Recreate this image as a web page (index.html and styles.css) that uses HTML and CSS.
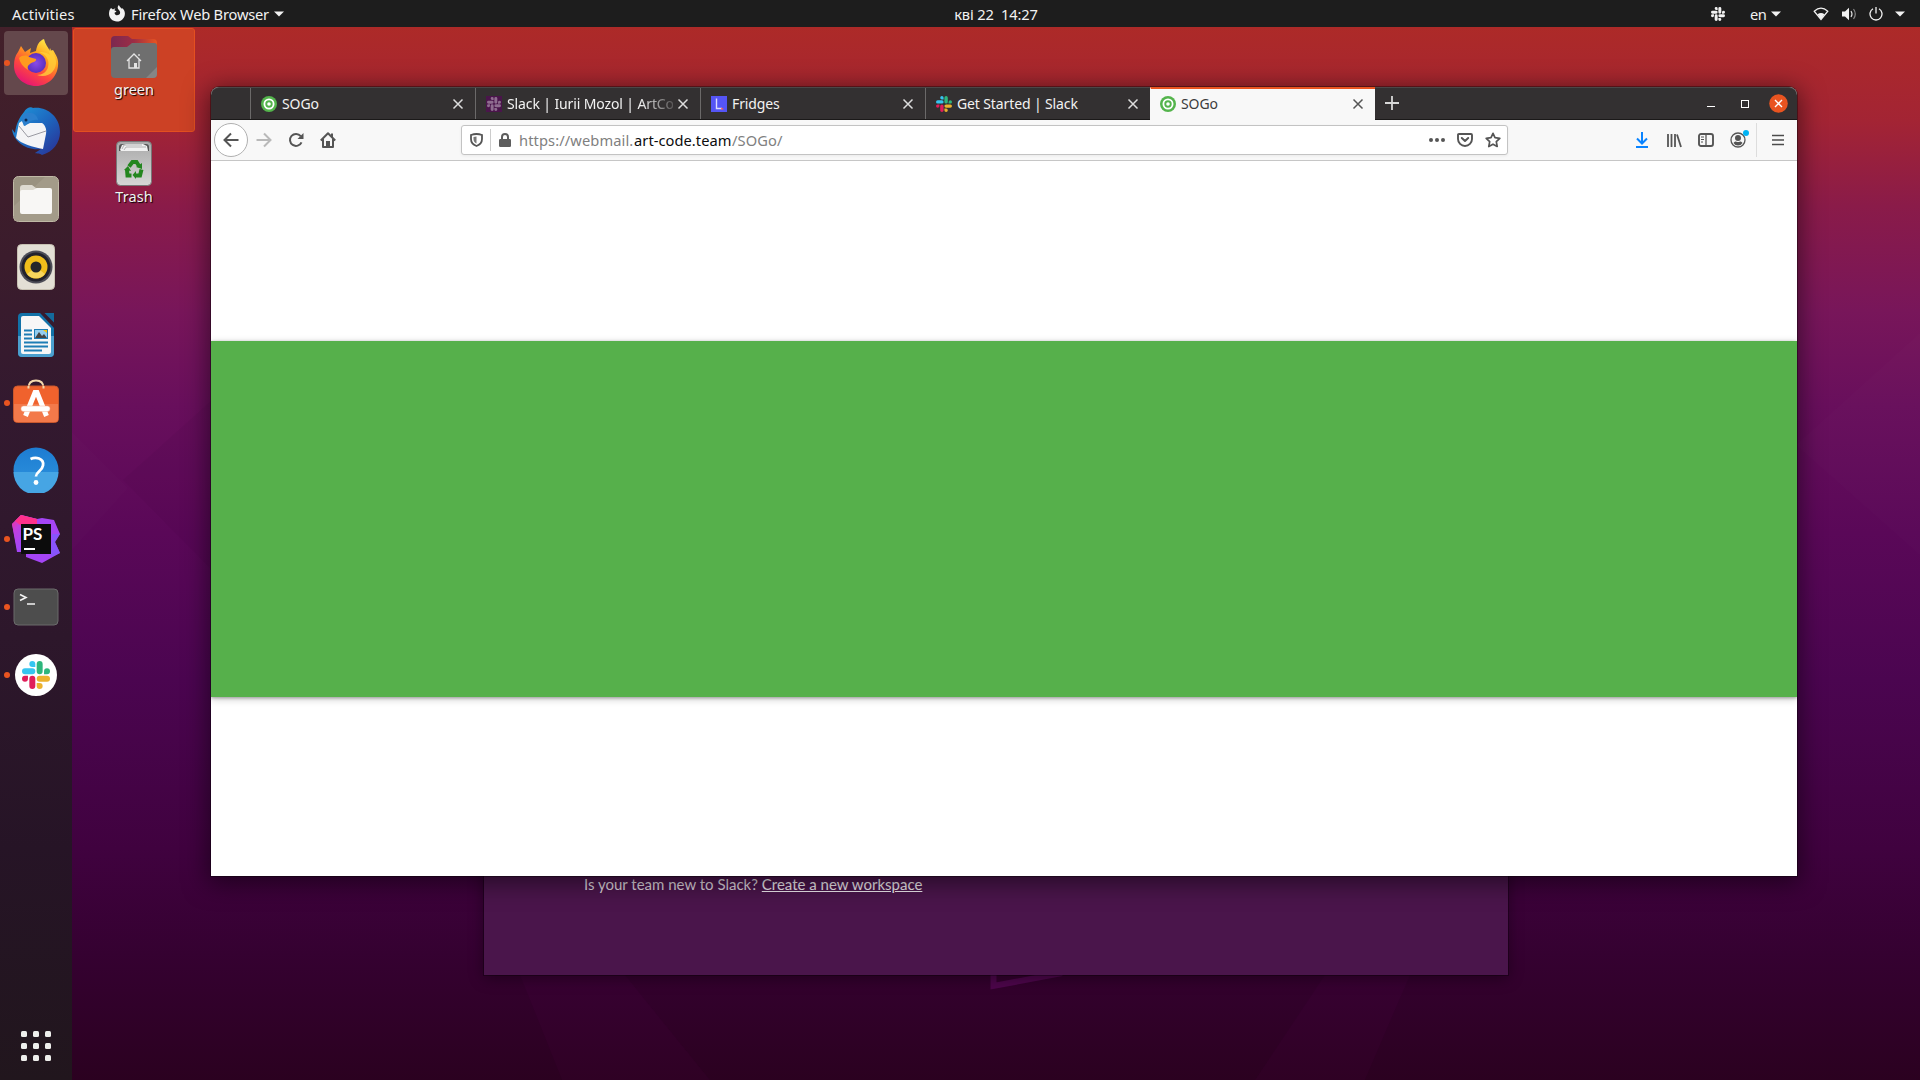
FILE: index.html
```html
<!DOCTYPE html>
<html lang="en">
<head>
<meta charset="utf-8">
<title>Desktop</title>
<link rel="stylesheet" href="styles.css">
</head>
<body>
<svg class="defs" width="0" height="0">
  <defs>
    <symbol id="sogo" viewBox="0 0 16 16"><circle cx="8" cy="8" r="8" fill="#54b44c"/><circle cx="8" cy="8" r="4.6" fill="none" stroke="#fff" stroke-width="1.8"/><circle cx="8" cy="8" r="1.8" fill="#fff"/></symbol>
    <symbol id="slack" viewBox="0 0 122 122">
      <path fill="var(--c1,#e01e5a)" d="M26 77a13 13 0 1 1-13-13h13zM32 77a13 13 0 0 1 26 0v32a13 13 0 0 1-26 0z"/>
      <path fill="var(--c2,#36c5f0)" d="M45 26a13 13 0 1 1 13-13v13zM45 32a13 13 0 0 1 0 26H13a13 13 0 0 1 0-26z"/>
      <path fill="var(--c3,#2eb67d)" d="M96 45a13 13 0 1 1 13 13H96zM90 45a13 13 0 0 1-26 0V13a13 13 0 0 1 26 0z"/>
      <path fill="var(--c4,#ecb22e)" d="M77 96a13 13 0 1 1-13 13V96zM77 90a13 13 0 0 1 0-26h32a13 13 0 0 1 0 26z"/>
    </symbol>
    <symbol id="close" viewBox="0 0 12 12"><path d="M1.5 1.5l9 9M10.5 1.5l-9 9" fill="none" stroke="currentColor" stroke-width="1.5"/></symbol>
    <symbol id="caret" viewBox="0 0 10 6"><path d="M0 .5h10L5 5.5z" fill="currentColor"/></symbol>
    <linearGradient id="gFox" x1=".8" y1="0" x2=".25" y2="1"><stop offset="0" stop-color="#fff44f"/><stop offset=".35" stop-color="#ffa21c"/><stop offset=".65" stop-color="#ff4a3c"/><stop offset="1" stop-color="#e3107a"/></linearGradient>
    <radialGradient id="gOrb"><stop offset="0" stop-color="#8a4be8"/><stop offset="1" stop-color="#5a2fc0"/></radialGradient>
    <linearGradient id="gBird" x1="0" y1="0" x2="1" y2="1"><stop offset="0" stop-color="#1f9bdc"/><stop offset=".5" stop-color="#1d67bf"/><stop offset="1" stop-color="#2b2c92"/></linearGradient>
    <linearGradient id="gPs" x1="0" y1="0" x2="1" y2="1"><stop offset="0" stop-color="#ff318c"/><stop offset=".3" stop-color="#c040e0"/><stop offset=".6" stop-color="#a545f5"/><stop offset="1" stop-color="#7a5bff"/></linearGradient>
    <linearGradient id="gBin" x1="0" y1="0" x2="0" y2="1"><stop offset="0" stop-color="#a9a9a9"/><stop offset="1" stop-color="#d6d6d6"/></linearGradient>
    <linearGradient id="gTab" x1="0" y1="0" x2="1" y2="0"><stop offset="0" stop-color="#7b2850"/><stop offset=".5" stop-color="#9c2d45"/><stop offset="1" stop-color="#e95420"/></linearGradient>
    <linearGradient id="gHelp" x1="0" y1="0" x2="0" y2="1"><stop offset="0" stop-color="#1d7cd2"/><stop offset="1" stop-color="#2f95de"/></linearGradient>
  </defs>
</svg>

<header class="topbar">
  <div class="topbar-left">
    <span class="t-act">Activities</span>
    <svg class="t-fox" width="16" height="17" viewBox="0 0 16 17"><path fill="#f2f2f2" fill-rule="evenodd" d="M2 3l2 1.600C5 3.800 5.500 3.500 6.500 3.600 5.600 4.200 5.400 5 5.800 5.700c1.200.1 1.600.4 1.500 1-.5.6-1.500.5-1.800 1.200.4 1.700 2 2.700 3.700 2.200 1.700-.6 2.300-2.100 1.700-3.700C10.400 5.100 9 4.600 8.700 3 8.600 1.700 9.200.7 10 0c.2 1.300 1 2 2.100 2.900.4.300.7.600 1 1l.2-1c1.600 1.600 2.600 3.400 2.600 5.500C15.900 13 12.400 16.500 8 16.500S0 13.200 0 8.800C0 6.500.6 4.500 2 3z"/></svg>
    <span class="t-app">Firefox Web Browser</span>
    <svg class="t-caret" width="10" height="6"><use href="#caret"/></svg>
  </div>
  <div class="clock">кві 22&nbsp; 14:27</div>
  <div class="topbar-right">
    <svg class="tray-slack" width="14" height="14"><use href="#slack"/></svg>
    <span class="t-en">en</span>
    <svg class="en-caret" width="10" height="6"><use href="#caret"/></svg>
    <svg class="wifi" width="16" height="14" viewBox="0 0 16 14"><path d="M1.200 4.200Q8-1.800 14.800 4.200L8 12.500z" fill="none" stroke="#f2f2f2" stroke-width="1.200"/><path d="M4.500 7.200Q8 5 11.500 7.200L8 12.500z" fill="#f2f2f2"/></svg>
    <svg class="vol" width="15" height="14" viewBox="0 0 15 14"><path d="M0 4.500h3L7 .800v12.400L3 9.500H0z" fill="#f2f2f2"/><path d="M9 4q2 3 0 6" fill="none" stroke="#ddd" stroke-width="1.200"/><path d="M11.500 2q3.600 5 0 10" fill="none" stroke="#888" stroke-width="1.200"/></svg>
    <svg class="power" width="14" height="14" viewBox="0 0 14 14"><path d="M4 1.800a6 6 0 1 0 6 0M7 0v6.500" fill="none" stroke="#f2f2f2" stroke-width="1.300"/></svg>
    <svg class="sys-caret" width="10" height="6"><use href="#caret"/></svg>
  </div>
</header>

<main class="desktop">
  <svg class="wallpaper" width="1920" height="1053" viewBox="0 27 1920 1053">
    <path fill="#fff" opacity=".012" d="M72 432L128 488 72 550zM1796 445L1920 333V555z"/>
    <path fill="#000" opacity=".03" d="M123 480L212 570V400z"/>
    <path fill="#a020a0" opacity=".035" d="M520 975h105l85 105H562zM1255 1080l70-105h85l-45 105z"/>
    <path d="M993.500 960V986L1062 973" fill="none" stroke="#4d064b" stroke-width="6"/>
  </svg>

  <nav class="dock">
    <div class="app on active"><svg width="48" height="48" viewBox="0 0 48 48"><path fill="url(#gFox)" d="M6 13l3-6 4 6 6-4-1 5 6-2c1-6 3-10 8-12 1 5 4 8 6 12l3-1c3 5 6 9 5 16-1 11-10 20-22 20S2 38 2 27c0-6 1-10 4-14z"/><circle cx="24" cy="24" r="10" fill="url(#gOrb)"/><path fill="#ff9a1e" d="M7 19c3-3 8-3 10-1l7 2c1 3-4 3-6 5-2 1-3 3-2 6-5-3-8-7-9-12z"/><path fill="#ffcf3a" opacity=".8" d="M27 13c7 2 11 8 9 15-1 5-6 8-11 8 11 4 20-4 19-14-1-6-4-9-6-13-1 2-1 5 0 7-4-3-7-3-11-3z"/></svg></div>
    <div class="app"><svg width="48" height="48" viewBox="0 0 48 48"><path fill="url(#gBird)" d="M12 5C14 1 19-1 21 1c13-2 27 8 27 24 0 11-7 20-18 23-2-2-5-1-7-2l6-4C14 44 1 34 0 22l3 4c1-9 4-15 9-21z"/><path fill="#f4f4f6" d="M7 16l3-2 2 5 6-3 12 0c3 2 5 6 4 11l-3 15C21 40 9 37 4 31z"/><path fill="none" stroke="#9a9aa2" stroke-width="1" d="M7 19l9 11 18-6"/><path fill="#2b7fcd" d="M12 7c7-3 13 0 14 6-5-1-9 1-13 6-3-4-4-8-1-12z"/><circle cx="14" cy="13" r="1.500" fill="#0b2b55"/></svg></div>
    <div class="app"><svg width="46" height="46" viewBox="0 0 46 46"><rect x=".5" y=".5" width="45" height="45" rx="5" fill="#9a9280" stroke="#c0b9a6"/><path d="M1 45V30L32 1h9q4 0 4 4v36q0 4-4 4z" fill="#aaa28f" opacity=".6"/><path d="M7 12q0-3 3-3h9l4 3h12v10H7z" fill="#dedad0"/><path d="M7 16q0-2 2-2h11l4-2h13q2 0 2 2v22q0 2-2 2H9q-2 0-2-2z" fill="#f8f7f5"/></svg></div>
    <div class="app"><svg width="38" height="46" viewBox="0 0 38 46"><rect x=".5" y=".5" width="37" height="45" rx="4" fill="#e3dfd5" stroke="#c7c1b2"/><circle cx="19" cy="23" r="16.500" fill="#4d4d57"/><circle cx="19" cy="23" r="14.500" fill="#22222c"/><circle cx="19" cy="23" r="11.500" fill="#efbd1b"/><path d="M10 30a11.500 11.500 0 0 0 18 0L19 23z" fill="#f7d65c"/><circle cx="19" cy="23" r="5.500" fill="#24262a"/></svg></div>
    <div class="app"><svg width="38" height="46" viewBox="0 0 38 46"><path d="M5 1h18l14 15v25q0 4-4 4H5q-4 0-4-4V5q0-4 4-4z" fill="#1272a8"/><path d="M1 24h36v17q0 4-4 4H5q-4 0-4-4z" fill="#4b9fce"/><path d="M27.500 1H37v9.500z" fill="#146a9c"/><path d="M6 4h16l12 12v24q0 2-2 2H6q-2 0-2-2V6q0-2 2-2z" fill="#f7f7f7"/><path d="M7 18.500h8M7 22.500h8M7 26.500h8M7 30.500h24M7 34.500h24M7 38.500h18" stroke="#1d7db5" stroke-width="2"/><rect x="17" y="17" width="14" height="10" fill="#1d7db5"/><rect x="18" y="18" width="12" height="8" fill="#93cdf0"/><path d="M18 26l4-6 3 4 2-2 3 4z" fill="#444"/><path d="M26 18h4v3z" fill="#f1c40f"/></svg></div>
    <div class="app on"><svg class="store" width="46" height="44" viewBox="0 0 46 44"><path d="M15.500 11V9q0-7.500 7.500-7.500T30.500 9v2" fill="none" stroke="#f4d9ad" stroke-width="1.800"/><rect x=".5" y="7" width="45" height="36.500" rx="4" fill="#f0622d" stroke="#c8582e"/><path d="M1 25h44v15q0 3-3 3H4q-3 0-3-3z" fill="#f3794a"/><path d="M15.500 9.500V7M30.500 9.500V7" stroke="#f4d9ad" stroke-width="2"/><path d="M12.500 37L22 13.500h2L33.500 37" fill="none" stroke="#fff" stroke-width="5"/><rect x="8" y="27" width="29" height="5.500" rx="2.700" fill="#fff" stroke="#f3b294" stroke-width=".5"/></svg></div>
    <div class="app"><svg class="help" width="46" height="46" viewBox="0 0 46 46"><circle cx="23" cy="23" r="22.500" fill="url(#gHelp)"/><path d="M.5 25a22.500 22.500 0 0 0 45 0z" fill="#46a5e4"/><path d="M17.500 12Q22 10 26 11.500q5 2 4 7-.5 3-4 6-3 2.500-3 5" fill="none" stroke="#fff" stroke-width="2.800"/><circle cx="23" cy="35.500" r="2.400" fill="#fff"/></svg></div>
    <div class="app on"><svg width="48" height="48" viewBox="0 0 48 48"><path fill="#a545f5" d="M0 9L9 0l16 4 5-1 12 2 6 14-5 8 5 11-18 10-16-6v-5H5z"/><path fill="url(#gPs)" d="M0 9L9 0l16 4v30H5z"/><path fill="#ff318c" d="M3 6l6-6 16 4v6H8z"/><path fill="#7a5bff" d="M40 19l8 0-5 8 5 11-9 4z" opacity=".7"/><rect x="9" y="9" width="30" height="30" fill="#0c0c0c"/><text x="10.500" y="24.500" class="ps">PS</text><rect x="12" y="33" width="11" height="2" fill="#fff"/></svg></div>
    <div class="app on"><svg width="46" height="38" viewBox="0 0 46 38"><rect x="1" y="1" width="44" height="36" rx="4" fill="#4d4d4d" stroke="#6b6b6b"/><path d="M7 6.500l6 3-6 3M14 16h8" fill="none" stroke="#f2f2f2" stroke-width="1.600"/></svg></div>
    <div class="app on"><span class="slack-disc"><svg width="28" height="28"><use href="#slack"/></svg></span></div>
    <div class="grid-btn"><i></i><i></i><i></i><i></i><i></i><i></i><i></i><i></i><i></i></div>
  </nav>

  <section class="shortcuts">
    <div class="shortcut selected">
      <svg width="46" height="42" viewBox="0 0 46 42"><path d="M0 14V4q0-4 4-4h13l4 3h21q4 0 4 4v8z" fill="url(#gTab)"/><path d="M0 14q0-3 3-3h13l5-4h22q3 0 3 3v28q0 4-4 4H4q-4 0-4-4z" fill="#6f6f6f"/><path d="M35 42L46 31v7q0 4-4 4z" fill="#858585"/><path d="M16 25l7-7 7 7M18 23.500V32h10v-8.500M28 20v-2" fill="none" stroke="#e4e4e4" stroke-width="1.300"/><rect x="23" y="27" width="3" height="5" fill="#e4e4e4"/></svg>
      <span>green</span>
    </div>
    <div class="shortcut trash">
      <svg width="36" height="45" viewBox="0 0 36 45"><rect x=".5" y=".5" width="35" height="44" rx="4" fill="url(#gBin)" stroke="#787878"/><path d="M3 10V6q0-3 3-3h24q3 0 3 3v4z" fill="#555"/><path d="M4 9l2-5 4-1h17l4 2 1 5H5z" fill="#f1f1f1"/><path d="M6 8L8 4h18M8 9l2-3h20" stroke="#999" fill="none" stroke-width=".7"/><g fill="none" stroke="#23861f" stroke-width="4"><path d="M13 25.500l3.500-4.500h4l2.500 4"/><path d="M25.500 28.500l-1.500 6h-4.500"/><path d="M15.500 34.500h-4l-.5-6"/></g><path fill="#23861f" d="M20 26l6-4 0 6zM20 30v8l-3.500-4zM8 29l4-4 3 5z"/></svg>
      <span>Trash</span>
    </div>
  </section>

  <section class="slack-window">
    <p>Is your team new to Slack? <a>Create a new workspace</a></p>
  </section>

  <section class="browser">
    <div class="tabs">
      <div class="tab"><svg width="16" height="16"><use href="#sogo"/></svg><span>SOGo</span><svg class="x" width="12" height="12"><use href="#close"/></svg></div>
      <div class="tab"><b class="fav dim"><svg width="14" height="14"><use href="#slack"/></svg></b><span class="fade">Slack | Iurii Mozol | ArtCo</span><svg class="x" width="12" height="12"><use href="#close"/></svg></div>
      <div class="tab"><svg width="16" height="16" viewBox="0 0 16 16"><rect width="16" height="16" fill="#5555f5"/><path d="M5.500 2.500v10H11" fill="none" stroke="#dcdcff" stroke-width="1.400"/><path d="M10 11.500l3 1.500-2.500 1z" fill="#ff5a4a"/></svg><span>Fridges</span><svg class="x" width="12" height="12"><use href="#close"/></svg></div>
      <div class="tab"><svg width="16" height="16"><use href="#slack"/></svg><span>Get Started | Slack</span><svg class="x" width="12" height="12"><use href="#close"/></svg></div>
      <div class="tab current"><svg width="16" height="16"><use href="#sogo"/></svg><span>SOGo</span><svg class="x" width="12" height="12"><use href="#close"/></svg></div>
      <svg class="plus" width="14" height="14" viewBox="0 0 14 14"><path d="M7 0v14M0 7h14" stroke="#d8d8d8" stroke-width="1.800"/></svg>
      <div class="controls">
        <svg width="8" height="8" viewBox="0 0 8 8"><path d="M0 6.500h8" stroke="#fff"/></svg>
        <svg width="8" height="8" viewBox="0 0 8 8"><rect x=".5" y=".5" width="7" height="7" fill="none" stroke="#fff"/></svg>
        <svg width="19" height="19" viewBox="0 0 19 19"><circle cx="9.500" cy="9.500" r="9.300" fill="#e95420"/><path d="M6 6l7 7M13 6l-7 7" stroke="#fff" stroke-width="1.400"/></svg>
      </div>
    </div>
    <div class="toolbar">
      <div class="nav">
        <span class="back"><svg width="16" height="16" viewBox="0 0 16 16"><path d="M15.500 8H1.500M8 1.500L1.500 8 8 14.500" fill="none" stroke="#555" stroke-width="2"/></svg></span>
        <svg class="fwd" width="16" height="16" viewBox="0 0 16 16"><path d="M.5 8h14M8 1.500L14.500 8 8 14.500" fill="none" stroke="#b9b9b9" stroke-width="2"/></svg>
        <svg class="reload" width="16" height="16" viewBox="0 0 16 16"><path d="M13.500 10.300a6 6 0 1 1-.8-6.100" fill="none" stroke="#555" stroke-width="2"/><path d="M15.500 1v6H9.500z" fill="#555"/></svg>
        <svg class="home" width="16" height="16" viewBox="0 0 16 16"><path d="M.800 8.500L8 1.300l7.200 7.200M3 7v8h10V7" fill="none" stroke="#555" stroke-width="2" stroke-linejoin="round"/><path d="M12 1.500v4" stroke="#555" stroke-width="2"/><path d="M6 15V9h4v6z" fill="#555"/></svg>
      </div>
      <div class="url">
        <svg class="shield" width="13" height="14" viewBox="0 0 13 14"><path d="M1 2Q6.500 0 12 2v4q0 5-5.500 7Q1 11 1 6z" fill="none" stroke="#555" stroke-width="1.800"/><path d="M6.500 3.500v7Q3.500 9 3.500 6V4z" fill="#777"/></svg>
        <i class="sep"></i>
        <svg class="lock" width="12" height="14" viewBox="0 0 12 14"><rect y="6" width="12" height="8" rx="1.300" fill="#5d5d5d"/><path d="M3 7V4a3 3 0 0 1 6 0v3" fill="none" stroke="#5d5d5d" stroke-width="2"/></svg>
        <span class="addr"><span class="a1">https://webmail.</span><span class="a2">art-code.team</span><span class="a3">/SOGo/</span></span>
        <svg class="dots" width="16" height="4" viewBox="0 0 16 4"><circle cx="2" cy="2" r="2"/><circle cx="8" cy="2" r="2"/><circle cx="14" cy="2" r="2"/></svg>
        <svg class="pocket" width="16" height="14" viewBox="0 0 16 14"><path d="M2 1h12q1 0 1 1v4a7 7 0 0 1-14 0V2q0-1 1-1z" fill="none" stroke="#555" stroke-width="1.900"/><path d="M4.800 5L8 8l3.200-3" fill="none" stroke="#555" stroke-width="2" stroke-linecap="round" stroke-linejoin="round"/></svg>
        <svg class="star" width="16" height="16" viewBox="0 0 16 16"><path d="M8 1.300l2 4.400 4.800.6-3.500 3.300.9 4.900L8 12.200l-4.200 2.300.9-4.900L1.200 6.300 6 5.700z" fill="none" stroke="#555" stroke-width="1.700" stroke-linejoin="round"/></svg>
      </div>
      <div class="tools">
        <svg width="14" height="16" viewBox="0 0 14 16"><path d="M7 0v11M2 6.500l5 5 5-5M1 15h12" fill="none" stroke="#0a84ff" stroke-width="2"/></svg>
        <svg width="16" height="15" viewBox="0 0 16 15"><path d="M2 1v13M5.500 1v13M9 1v13M11 1.500L15 14" fill="none" stroke="#555" stroke-width="1.800"/></svg>
        <svg width="16" height="14" viewBox="0 0 16 14"><rect x="1" y="1" width="14" height="12" rx="2" fill="none" stroke="#555" stroke-width="1.900"/><path d="M8 1v12" stroke="#555" stroke-width="1.300"/><path d="M3 4h3M3 6.500h3M3 9h2" stroke="#555"/></svg>
        <span class="acct"><svg width="16" height="16" viewBox="0 0 16 16"><circle cx="8" cy="8" r="7" fill="none" stroke="#555" stroke-width="1.300"/><circle cx="8" cy="6" r="3" fill="#555"/><path d="M3.500 11q1-2 2.500-1.500 2 1 4 0 1.500-.5 2.500 1.500-1.500 2.500-4.500 2.500T3.500 11z" fill="#555"/></svg><i></i></span>
        <i class="vsep"></i>
        <svg class="burger" width="12" height="12" viewBox="0 0 12 12"><path d="M0 1.500h12M0 6h12M0 10.500h12" stroke="#4c4c4c" stroke-width="1.700"/></svg>
      </div>
    </div>
    <div class="page"><div class="band"></div></div>
  </section>
</main>
</body>
</html>
```
FILE: styles.css
```css
* { box-sizing: border-box; }
body {
  margin: 0;
  width: 1920px;
  height: 1080px;
  overflow: hidden;
  display: flex;
  flex-direction: column;
  font-family: "Noto Sans", "Open Sans", sans-serif;
  font-size: 14px;
  color: #f2f2f2;
}
svg { display: block; flex: none; }
.defs { position: absolute; }
span { white-space: nowrap; }

/* Top panel */
.topbar {
  height: 27px;
  flex: none;
  background: #1d1d1d;
  display: grid;
  grid-template-columns: 954px 84px 1fr;
  align-items: center;
  font-size: 14.670px;
  line-height: 26px;
}
.topbar-left, .topbar-right { display: flex; align-items: center; height: 26px; }
.topbar-left { padding-left: 12px; }
.t-act { width: 97px; letter-spacing: .15px; }
.t-fox { margin-right: 6px; }
.t-app { width: 143px; letter-spacing: -.2px; }
.t-caret { margin-top: 1px; }
.clock { text-align: center; white-space: nowrap; letter-spacing: -.15px; }
.topbar-right { justify-content: flex-end; padding-right: 15px; }
.tray-slack { --c1: #f2f2f2; --c2: #f2f2f2; --c3: #f2f2f2; --c4: #f2f2f2; margin-right: 25px; }
.t-en { width: 21px; letter-spacing: -.4px; }
.en-caret { margin-right: 32px; }
.wifi { margin-right: 13px; }
.vol { margin-right: 12px; }
.power { margin-right: 12px; }

/* Desktop canvas */
.desktop {
  position: relative;
  flex: 1;
  background: linear-gradient(180deg, #ad2a28 0, #a32434 9%, #8a1b49 17%, #78165a 27%, #680f5c 36%, #5a0858 48%, #4b0550 62%, #40023f 78%, #350131 88%, #2b0120 100%);
}
.wallpaper { position: absolute; inset: 0; }

.dock {
  position: absolute;
  left: 0;
  top: 0;
  width: 72px;
  height: 1053px;
  padding: 2px 4px;
  background: linear-gradient(180deg, #43202a 0, #3b1c2c 22%, #33192f 36%, #2d172b 58%, #261426 78%, #21161d 100%);
  display: flex;
  flex-direction: column;
}
.app {
  position: relative;
  width: 64px;
  height: 64px;
  margin: 2px 0;
  display: flex;
  align-items: center;
  justify-content: center;
  border-radius: 4px;
}
.active { background: #64484c; }
.on::before {
  content: "";
  position: absolute;
  left: 0;
  top: 29px;
  width: 6px;
  height: 6px;
  border-radius: 50%;
  background: #e95420;
}
.store { margin-bottom: 5px; }
.help { margin-bottom: 2px; }
.ps { font: 700 17px Lato, sans-serif; fill: #fff; }
.slack-disc {
  width: 42px;
  height: 42px;
  border-radius: 50%;
  background: #fff;
  display: grid;
  place-items: center;
}
.grid-btn {
  margin: auto 0 17px 17px;
  display: grid;
  grid-template-columns: repeat(3, 6px);
  gap: 6px;
}
.grid-btn i { height: 6px; border-radius: 1.500px; background: #eeeeec; }

.shortcuts {
  position: absolute;
  left: 73px;
  top: 1px;
  width: 122px;
}
.shortcut {
  height: 104px;
  padding-top: 8px;
  display: flex;
  flex-direction: column;
  align-items: center;
  border-radius: 3px;
  font-size: 14.500px;
  line-height: 20px;
  text-shadow: 1px 1px 1px #000;
}
.shortcut span { margin-top: 1px; }
.selected { background: #cc4125; border: 1px solid #e4501f; padding-top: 7px; }
.trash { padding-top: 9px; }
.trash span { margin-top: 0; letter-spacing: .1px; }

.slack-window {
  position: absolute;
  left: 484px;
  top: 200px;
  width: 1024px;
  height: 748px;
  padding: 0 0 79px 100px;
  background: #4a154b;
  box-shadow: 0 0 0 1px rgba(0,0,0,.3), 0 3px 14px rgba(0,0,0,.4);
  display: flex;
  align-items: flex-end;
  font: 15px/24px Lato, sans-serif;
  color: #dcd3dc;
}
.slack-window p { margin: 0; white-space: nowrap; }
.slack-window a { text-decoration: underline; color: #eee8ee; }

/* Browser window */
.browser {
  position: absolute;
  left: 211px;
  top: 60px;
  width: 1586px;
  height: 789px;
  background: #fff;
  border-radius: 8px 8px 0 0;
  box-shadow: 0 0 0 1px rgba(0,0,0,.35), 0 4px 24px 3px rgba(0,0,0,.5);
  display: flex;
  flex-direction: column;
}
.tabs {
  height: 33px;
  flex: none;
  padding-left: 39px;
  background: #333031;
  border-top: 1px solid #4a4748;
  border-bottom: 1px solid #1b1919;
  border-radius: 8px 8px 0 0;
  display: flex;
}
.tab {
  width: 225px;
  height: 31px;
  padding: 1px 11px 0 10px;
  border-left: 1px solid #6b6969;
  display: flex;
  align-items: center;
  line-height: 30px;
  color: #f2f2f2;
}
.tab span { margin-left: 5px; flex: 1; overflow: hidden; letter-spacing: -.12px; }
.tab .x { margin-left: 4px; color: #ddd; }
.fade { -webkit-mask-image: linear-gradient(90deg, #000 80%, rgba(0,0,0,.2) 100%); }
.fav { flex: none; width: 16px; height: 16px; display: grid; place-items: center; }
.dim { background: #4a154b; --c1: #8f6d90; --c2: #8f6d90; --c3: #8f6d90; --c4: #8f6d90; }
.current {
  height: 33px;
  margin-top: -1px;
  padding: 0 11px 2px 9px;
  border-left-color: #f8f8f8;
  border-top: 2px solid #e95420;
  background: #f8f8f8;
  color: #3c3c3c;
}
.tab.current .x { color: #555; }
.plus { margin: 8px 0 0 10px; }
.controls { margin-left: auto; padding: 0 9px 0 0; display: flex; align-items: center; gap: 26px; }
.controls svg:last-child { margin-left: -6px; }

.toolbar {
  height: 41px;
  flex: none;
  background: #f8f8f8;
  border-bottom: 1px solid #c6c6c6;
  display: flex;
  align-items: center;
}
.nav { width: 250px; padding-left: 3px; display: flex; align-items: center; }
.back {
  width: 34px;
  height: 34px;
  border: 1px solid #b0b0b0;
  border-radius: 50%;
  background: #fff;
  display: grid;
  place-items: center;
}
.fwd { margin-left: 8px; }
.reload, .home { margin-left: 16px; }
.url {
  width: 1047px;
  height: 30px;
  background: #fff;
  border: 1px solid #c3c3c3;
  border-radius: 3px;
  box-shadow: 0 1px 3px rgba(0,0,0,.06);
  display: flex;
  align-items: center;
  padding: 0 6px 0 8px;
  fill: #555;
}
.sep { width: 1px; height: 22px; margin: 0 8px 0 7px; background: #ccc; }
.addr { margin-left: 8px; flex: 1; display: flex; font-size: 14.670px; line-height: 28px; color: #808080; }
.a1 { width: 115px; letter-spacing: .1px; }
.a2 { width: 98px; color: #0c0c0d; letter-spacing: .05px; }
.a3 { letter-spacing: .1px; }
.pocket { margin-left: 12px; }
.star { margin-left: 12px; }
.tools { flex: 1; padding: 0 13px 0 0; display: flex; align-items: center; justify-content: flex-end; gap: 16px; }
.tools > svg:first-child { margin-right: 1px; }
.acct { position: relative; }
.acct i {
  position: absolute;
  left: 13px;
  top: -2px;
  width: 6px;
  height: 6px;
  border-radius: 50%;
  background: #00b3f4;
}
.vsep { width: 1px; height: 34px; margin-left: -6px; background: #ddd; }
.burger { margin-left: -1px; }

.page { flex: 1; padding-top: 180px; overflow: hidden; }
.band { height: 356px; background: #56b04b; box-shadow: 0 1px 3px rgba(0,0,0,.3), 0 2px 8px rgba(0,0,0,.2); }
```
